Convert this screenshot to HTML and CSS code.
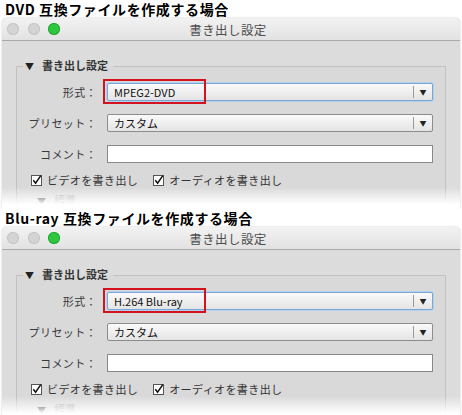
FILE: index.html
```html
<!DOCTYPE html>
<html lang="ja">

<head>
    <meta charset="UTF-8">
    <title>書き出し設定</title>
    <link rel="stylesheet" href="styles.css">
</head>

<body>

    <div class="section">
        <h2 class="heading">DVD 互換ファイルを作成する場合</h2>
        <div class="window">
            <div class="titlebar">
                <div class="lights">
                    <span class="light"></span>
                    <span class="light"></span>
                    <span class="light green"></span>
                </div>
                <div class="win-title">書き出し設定</div>
            </div>
            <div class="win-body">
                <fieldset class="group">
                    <legend class="group-title"><span class="tri">▼</span>書き出し設定</legend>
                    <div class="row first">
                        <label class="label">形式：</label>
                        <div class="select focus">
                            <span class="select-text">MPEG2-DVD</span>
                            <span class="select-arrow">▼</span>
                        </div>
                        <div class="mark"></div>
                    </div>
                    <div class="row">
                        <label class="label">プリセット：</label>
                        <div class="select">
                            <span class="select-text">カスタム</span>
                            <span class="select-arrow">▼</span>
                        </div>
                    </div>
                    <div class="row">
                        <label class="label">コメント：</label>
                        <div class="textbox"></div>
                    </div>
                    <div class="checks">
                        <span class="check">
                            <svg width="11" height="11" viewBox="0 0 11 11"><rect x="0.5" y="0.5" width="10" height="10" fill="#fff" stroke="#555"/><path d="M2.3 5.2 L4.6 8.2 L9.8 0.6" fill="none" stroke="#111" stroke-width="1.5"/></svg>
                            ビデオを書き出し
                        </span>
                        <span class="check">
                            <svg width="11" height="11" viewBox="0 0 11 11"><rect x="0.5" y="0.5" width="10" height="10" fill="#fff" stroke="#555"/><path d="M2.3 5.2 L4.6 8.2 L9.8 0.6" fill="none" stroke="#111" stroke-width="1.5"/></svg>
                            オーディオを書き出し
                        </span>
                    </div>
                    <div class="next-group"><span class="tri">▼</span>標準</div>
                </fieldset>
                <div class="fade"></div>
            </div>
        </div>
    </div>

    <div class="section">
        <h2 class="heading">Blu-ray 互換ファイルを作成する場合</h2>
        <div class="window">
            <div class="titlebar">
                <div class="lights">
                    <span class="light"></span>
                    <span class="light"></span>
                    <span class="light green"></span>
                </div>
                <div class="win-title">書き出し設定</div>
            </div>
            <div class="win-body">
                <fieldset class="group">
                    <legend class="group-title"><span class="tri">▼</span>書き出し設定</legend>
                    <div class="row first">
                        <label class="label">形式：</label>
                        <div class="select focus">
                            <span class="select-text">H.264 Blu-ray</span>
                            <span class="select-arrow">▼</span>
                        </div>
                        <div class="mark"></div>
                    </div>
                    <div class="row">
                        <label class="label">プリセット：</label>
                        <div class="select">
                            <span class="select-text">カスタム</span>
                            <span class="select-arrow">▼</span>
                        </div>
                    </div>
                    <div class="row">
                        <label class="label">コメント：</label>
                        <div class="textbox"></div>
                    </div>
                    <div class="checks">
                        <span class="check">
                            <svg width="11" height="11" viewBox="0 0 11 11"><rect x="0.5" y="0.5" width="10" height="10" fill="#fff" stroke="#555"/><path d="M2.3 5.2 L4.6 8.2 L9.8 0.6" fill="none" stroke="#111" stroke-width="1.5"/></svg>
                            ビデオを書き出し
                        </span>
                        <span class="check">
                            <svg width="11" height="11" viewBox="0 0 11 11"><rect x="0.5" y="0.5" width="10" height="10" fill="#fff" stroke="#555"/><path d="M2.3 5.2 L4.6 8.2 L9.8 0.6" fill="none" stroke="#111" stroke-width="1.5"/></svg>
                            オーディオを書き出し
                        </span>
                    </div>
                    <div class="next-group"><span class="tri">▼</span>標準</div>
                </fieldset>
                <div class="fade"></div>
            </div>
        </div>
    </div>

</body>

</html>
```

FILE: styles.css
```css
body {
    margin: 0;
    width: 462px;
    background-color: #ffffff;
    font-family: "Noto Sans CJK JP", "Noto Sans", sans-serif;
    color: #222;
}

.section {
    height: 209px;
    overflow: hidden;
}

.heading {
    margin: 0;
    height: 18px;
    padding-left: 5px;
    font-size: 14px;
    font-weight: bold;
    line-height: 18px;
    color: #000;
    letter-spacing: 0.6px;
}

.window {
    margin: 0 2px;
    height: 191px;
    border-radius: 5px 5px 0 0;
    background-color: #dcdcdc;
    box-shadow: 0 0 2px rgba(0, 0, 0, 0.25);
    overflow: hidden;
}

.titlebar {
    height: 22px;
    display: flex;
    align-items: center;
    background: linear-gradient(#f2f2f2, #e2e2e2);
    border-bottom: 1px solid #a9a9a9;
}

.lights {
    display: flex;
    gap: 8.5px;
    padding-left: 5px;
}

.light {
    width: 12px;
    height: 12px;
    border-radius: 50%;
    background-color: #d4d4d4;
    box-shadow: inset 0 0 0 1px #c4c4c4;
}

.light.green {
    background-color: #2ec840;
    box-shadow: inset 0 0 0 1px #22a831;
}

.win-title {
    flex: 1;
    text-align: center;
    font-size: 12.5px;
    color: #4d4d4d;
    margin-right: 64px;
    letter-spacing: 0.4px;
}

.win-body {
    position: relative;
    padding-top: 16px;
    height: 152px;
}

.group {
    margin: 0 14px;
    padding: 0 12px 0 0;
    border: 1px solid #c2c2c2;
    border-bottom: none;
    background-color: #d9d9d9;
    height: 160px;
}

.group-title {
    margin-left: 6px;
    padding: 0 5px 0 2px;
    font-size: 11px;
    font-weight: bold;
    color: #333;
    line-height: 16px;
}

.tri {
    font-size: 9px;
    margin-right: 8px;
    color: #222;
}

.row {
    display: flex;
    align-items: center;
    height: 18px;
    margin-top: 13px;
    position: relative;
}

.row.first {
    margin-top: 8px;
}

.label {
    width: 80px;
    text-align: right;
    font-size: 11px;
    color: #3a3a3a;
    margin-right: 10px;
    letter-spacing: 0.4px;
}

.select {
    flex: 1;
    height: 16px;
    display: flex;
    align-items: center;
    border: 1px solid #8c8c8c;
    border-radius: 2px;
    background: linear-gradient(#fafafa, #e4e4e4);
}

.select.focus {
    border-color: #79a7d6;
    box-shadow: 0 0 0 1px #b4d0ee;
}

.select-text {
    flex: 1;
    padding-left: 6px;
    font-size: 11px;
    color: #111;
}

.select-arrow {
    width: 18px;
    height: 12px;
    line-height: 12px;
    text-align: center;
    font-size: 7px;
    color: #222;
    border-left: 1px solid #9a9a9a;
}

.mark {
    position: absolute;
    left: 86px;
    top: -4px;
    width: 99px;
    height: 21px;
    border: 2px solid #d3121d;
}

.textbox {
    flex: 1;
    height: 16px;
    border: 1px solid #888;
    background-color: #ffffff;
}

.checks {
    display: flex;
    gap: 15px;
    margin-top: 9px;
    padding-left: 14px;
    font-size: 11px;
    line-height: 16px;
    color: #333;
    white-space: nowrap;
    letter-spacing: 0.4px;
}

.check {
    display: flex;
    align-items: center;
    gap: 5px;
}

.check svg {
    flex-shrink: 0;
}

.next-group {
    margin-top: 5px;
    padding-left: 20px;
    font-size: 11px;
    font-weight: bold;
    color: #aaa;
    line-height: 14px;
}

.fade {
    position: absolute;
    left: 0;
    right: 0;
    bottom: 0;
    height: 22px;
    background: linear-gradient(rgba(255, 255, 255, 0), #ffffff 80%);
}
```
